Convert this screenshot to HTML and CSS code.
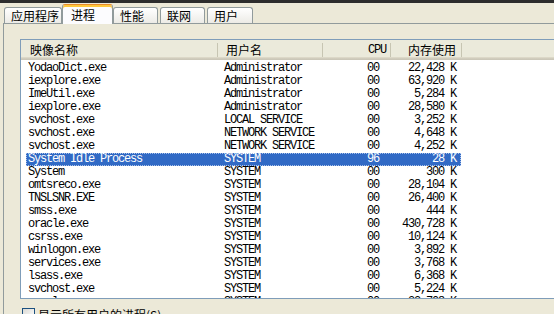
FILE: index.html
```html
<!DOCTYPE html>
<html>
<head>
  <meta charset="utf-8">
  <title>Windows 任务管理器</title>
  <link rel="stylesheet" href="styles.css">
</head>
<body>
  <div class="topbar"></div>

  <!-- 选项卡 -->
  <div class="tabs">
    <div class="tab t-apps">应用程序</div>
    <div class="tab t-proc on">进程</div>
    <div class="tab t-perf">性能</div>
    <div class="tab t-net">联网</div>
    <div class="tab t-user">用户</div>
  </div>

  <div class="panel">
    <div class="list">
      <div class="head">
        <div class="hc h-name">映像名称</div>
        <div class="hc h-user">用户名</div>
        <div class="hc h-cpu">CPU</div>
        <div class="hc h-mem">内存使用</div>
      </div>
      <div class="rows">
        <div class="row"><span class="name">YodaoDict.exe</span><span class="user">Administrator</span><span class="cpu">00</span><span class="mem">22,428 K</span></div>
        <div class="row"><span class="name">iexplore.exe</span><span class="user">Administrator</span><span class="cpu">00</span><span class="mem">63,920 K</span></div>
        <div class="row"><span class="name">ImeUtil.exe</span><span class="user">Administrator</span><span class="cpu">00</span><span class="mem">5,284 K</span></div>
        <div class="row"><span class="name">iexplore.exe</span><span class="user">Administrator</span><span class="cpu">00</span><span class="mem">28,580 K</span></div>
        <div class="row"><span class="name">svchost.exe</span><span class="user">LOCAL SERVICE</span><span class="cpu">00</span><span class="mem">3,252 K</span></div>
        <div class="row"><span class="name">svchost.exe</span><span class="user">NETWORK SERVICE</span><span class="cpu">00</span><span class="mem">4,648 K</span></div>
        <div class="row"><span class="name">svchost.exe</span><span class="user">NETWORK SERVICE</span><span class="cpu">00</span><span class="mem">4,252 K</span></div>
        <div class="row sel"><span class="name">System Idle Process</span><span class="user">SYSTEM</span><span class="cpu">96</span><span class="mem">28 K</span></div>
        <div class="row"><span class="name">System</span><span class="user">SYSTEM</span><span class="cpu">00</span><span class="mem">300 K</span></div>
        <div class="row"><span class="name">omtsreco.exe</span><span class="user">SYSTEM</span><span class="cpu">00</span><span class="mem">28,104 K</span></div>
        <div class="row"><span class="name">TNSLSNR.EXE</span><span class="user">SYSTEM</span><span class="cpu">00</span><span class="mem">26,400 K</span></div>
        <div class="row"><span class="name">smss.exe</span><span class="user">SYSTEM</span><span class="cpu">00</span><span class="mem">444 K</span></div>
        <div class="row"><span class="name">oracle.exe</span><span class="user">SYSTEM</span><span class="cpu">00</span><span class="mem">430,728 K</span></div>
        <div class="row"><span class="name">csrss.exe</span><span class="user">SYSTEM</span><span class="cpu">00</span><span class="mem">10,124 K</span></div>
        <div class="row"><span class="name">winlogon.exe</span><span class="user">SYSTEM</span><span class="cpu">00</span><span class="mem">3,892 K</span></div>
        <div class="row"><span class="name">services.exe</span><span class="user">SYSTEM</span><span class="cpu">00</span><span class="mem">3,768 K</span></div>
        <div class="row"><span class="name">lsass.exe</span><span class="user">SYSTEM</span><span class="cpu">00</span><span class="mem">6,368 K</span></div>
        <div class="row"><span class="name">svchost.exe</span><span class="user">SYSTEM</span><span class="cpu">00</span><span class="mem">5,224 K</span></div>
        <div class="row"><span class="name">spoolsv.exe</span><span class="user">SYSTEM</span><span class="cpu">00</span><span class="mem">32,708 K</span></div>
      </div>
    </div>

    <label class="check"><span class="box"></span>显示所有用户的进程(S)</label>
  </div>
</body>
</html>
```

FILE: styles.css
```css
/* halaman dasar */
body {
  margin: 0;
  overflow: hidden;
  background-color: #ECE9D8;
  font-family: "Noto Sans CJK SC", sans-serif;
  font-size: 12px;
  color: #000;
}

.topbar {
  height: 3px;
  background-color: #2d2d2d;
}

/* tab */
.tabs {
  display: flex;
  align-items: flex-end;
  height: 21px;
  padding-left: 4px;
}

.tab {
  box-sizing: border-box;
  height: 16px;
  margin-bottom: 1px;
  padding-left: 6px;
  line-height: 15px;
  border: 1px solid #919B9C;
  border-bottom: none;
  border-radius: 3px 3px 0 0;
  background: linear-gradient(#ffffff, #ECEBE6);
  white-space: nowrap;
}

.tab.on {
  height: 20px;
  margin-bottom: 0;
  padding-left: 8px;
  padding-top: 2px;
  border-top-color: #E68B2C;
  background: #FCFCFE;
  box-shadow: inset 0 2px #FFC83C;
}

.t-apps { width: 58px; }
.t-proc { width: 51px; }
.t-perf { width: 45px; }
.t-net { width: 45px; margin-left: 2px; }
.t-user { width: 46px; margin-left: 2px; }

/* panel */
.panel {
  margin-left: 3px;
  margin-top: -1px;
  height: 400px;
  padding: 15px 0 0 16px;
  border-top: 1px solid #919B9C;
  border-left: 1px solid #919B9C;
}

.list {
  box-sizing: border-box;
  width: 600px;
  height: 260px;
  border: 1px solid #7F9DB9;
  background-color: #fff;
  overflow: hidden;
}

.head {
  display: flex;
  align-items: center;
  height: 20px;
  background: linear-gradient(#EBEADB 0, #EBEADB 17px, #E2DECD 17px, #D6D2C2 18px, #CBC7B8 19px);
}

.hc {
  box-sizing: border-box;
  height: 14px;
  line-height: 14px;
  border-right: 1px solid #C7C5B2;
  white-space: nowrap;
}

.h-name { width: 197px; padding-left: 9px; }
.h-user { width: 105px; padding-left: 8px; }
.h-cpu { width: 68px; padding-right: 4px; text-align: right; font-family: "Liberation Mono", monospace; font-size: 12px; letter-spacing: -1.2px; }
.h-mem { width: 71px; padding-left: 17px; }

/* baris */
.rows {
  padding-top: 2px;
}

.row {
  display: flex;
  width: 435px;
  height: 13px;
  margin-left: 5px;
  line-height: 13px;
  font-family: "Liberation Mono", monospace;
  font-size: 12px;
  letter-spacing: -1.2px;
  white-space: nowrap;
}

.row span {
  box-sizing: border-box;
  overflow: hidden;
}

.name { width: 191px; padding-left: 2px; }
.user { width: 105px; padding-left: 7px; }
.cpu { width: 68px; padding-right: 11px; text-align: right; }
.mem { width: 71px; padding-right: 5px; text-align: right; }

.row.sel {
  background-color: #316AC5;
  color: #fff;
  outline: 1px dotted #A9C1EA;
  outline-offset: -1px;
}

/* checkbox */
.check {
  display: flex;
  align-items: center;
  gap: 3px;
  margin: 7px 0 0 2px;
  white-space: nowrap;
}

.box {
  box-sizing: border-box;
  width: 13px;
  height: 13px;
  border: 1px solid #1C5180;
  background: linear-gradient(135deg, #DCDBD5, #ffffff);
}
```
